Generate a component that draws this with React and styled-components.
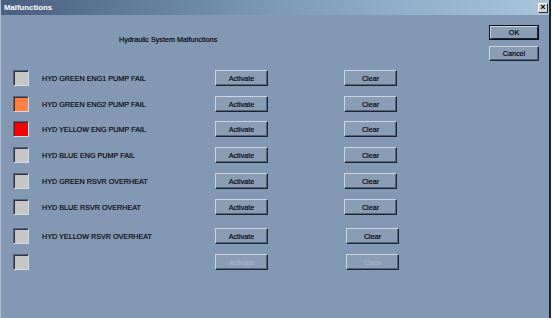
import React from "react";
import styled, { createGlobalStyle } from "styled-components";

const GlobalStyle = createGlobalStyle`
  body {
    margin: 0;
    background: #ffffff;
    font-family: "Liberation Sans", Arial, sans-serif;
  }
`;

const Window = styled.div`
  width: 551px;
  height: 318px;
  box-sizing: border-box;
  background: #8398b2;
  border-left: 1px solid #aebdcd;
  border-right: 2px solid #1a222e;
  display: flex;
  flex-direction: column;
`;

const TitleBar = styled.div`
  height: 15px;
  flex: none;
  display: flex;
  align-items: center;
  justify-content: space-between;
  padding: 0 1px 0 3px;
  background: linear-gradient(to right, #48607f, #7d99b6 50%, #a9c6dc);
`;

const TitleText = styled.span`
  color: #ffffff;
  font-weight: bold;
  font-size: 7.8px;
  line-height: 15px;
`;

const CloseBox = styled.div`
  width: 10px;
  height: 10px;
  box-sizing: border-box;
  background: #d4d4d4;
  border: 1px solid;
  border-color: #ffffff #303030 #303030 #ffffff;
  display: flex;
  align-items: center;
  justify-content: center;
  font-size: 9px;
  font-weight: bold;
  line-height: 1;
  color: #000;
`;

const Body = styled.div`
  flex: 1;
  display: flex;
`;

const Main = styled.div`
  flex: 1;
  padding-left: 12px;
`;

const Heading = styled.div`
  margin: 20px 0 0 106px;
  height: 10px;
  line-height: 10px;
  font-size: 7.2px;
  color: #000;
  -webkit-text-stroke: 0.15px #000;
`;

const Rows = styled.div`
  margin-top: 25px;
`;

const Row = styled.div`
  display: flex;
  align-items: center;
  height: 16px;
  margin-top: ${p => p.gap}px;
`;

const Indicator = styled.div`
  width: 16px;
  height: 16px;
  box-sizing: border-box;
  flex: none;
  background: ${p => p.color};
  border: 1px solid;
  border-color: #56627a #d2dbe5 #d2dbe5 #56627a;
  box-shadow: inset 1px 1px #2c3444;
`;

const Label = styled.div`
  width: 173px;
  margin-left: 13px;
  font-size: 7.2px;
  color: #000;
  -webkit-text-stroke: 0.15px #000;
  white-space: nowrap;
`;

const Button = styled.button`
  width: ${p => p.width || 53}px;
  height: ${p => p.height || 16}px;
  box-sizing: border-box;
  margin: 0 0 0 ${p => p.offset || 0}px;
  padding: 0;
  flex: none;
  background: #899db5;
  border: 1px solid;
  border-color: #cbd6e2 #1c2431 #1c2431 #cbd6e2;
  box-shadow: inset -1px -1px #56657a;
  font-family: "Liberation Sans", Arial, sans-serif;
  font-size: 7.2px;
  color: #000;
  -webkit-text-stroke: 0.15px #000;
  &:disabled {
    color: #a9b6c7;
    -webkit-text-stroke: 0;
    text-shadow: 1px 1px #94a6bc;
  }
`;

const DefaultButton = styled(Button)`
  outline: 1px solid #0c1018;
  outline-offset: -1px;
  border-width: 2px;
  border-color: #cbd6e2 #1c2431 #1c2431 #cbd6e2;
  box-shadow: none;
`;

const Side = styled.div`
  flex: none;
  display: flex;
  flex-direction: column;
  gap: 6px;
  padding: 10px 10px 0 0;
`;

const rows = [
  { label: "HYD GREEN ENG1 PUMP FAIL", color: "#c6c6c6", gap: 0 },
  { label: "HYD GREEN ENG2 PUMP FAIL", color: "#ff8040", gap: 10 },
  { label: "HYD YELLOW ENG PUMP FAIL", color: "#ff0000", gap: 9 },
  { label: "HYD BLUE ENG PUMP FAIL", color: "#c6c6c6", gap: 10 },
  { label: "HYD GREEN RSVR OVERHEAT", color: "#c6c6c6", gap: 10 },
  { label: "HYD BLUE RSVR OVERHEAT", color: "#c6c6c6", gap: 10 },
  { label: "HYD YELLOW RSVR OVERHEAT", color: "#c6c6c6", gap: 13, shift: 2 },
  { label: "", color: "#c6c6c6", gap: 10, shift: 2, disabled: true },
];

export default function App() {
  return (
    <>
      <GlobalStyle />
      <Window>
        <TitleBar>
          <TitleText>Malfunctions</TitleText>
          <CloseBox>×</CloseBox>
        </TitleBar>
        <Body>
          <Main>
            <Heading>Hydraulic System Malfunctions</Heading>
            <Rows>
              {rows.map((r, i) => (
                <Row key={i} gap={r.gap}>
                  <Indicator color={r.color} />
                  <Label>{r.label}</Label>
                  <Button disabled={r.disabled}>Activate</Button>
                  <Button offset={76 + (r.shift || 0)} disabled={r.disabled}>
                    Clear
                  </Button>
                </Row>
              ))}
            </Rows>
          </Main>
          <Side>
            <DefaultButton width={50} height={15}>OK</DefaultButton>
            <Button width={50} height={15}>Cancel</Button>
          </Side>
        </Body>
      </Window>
    </>
  );
}
